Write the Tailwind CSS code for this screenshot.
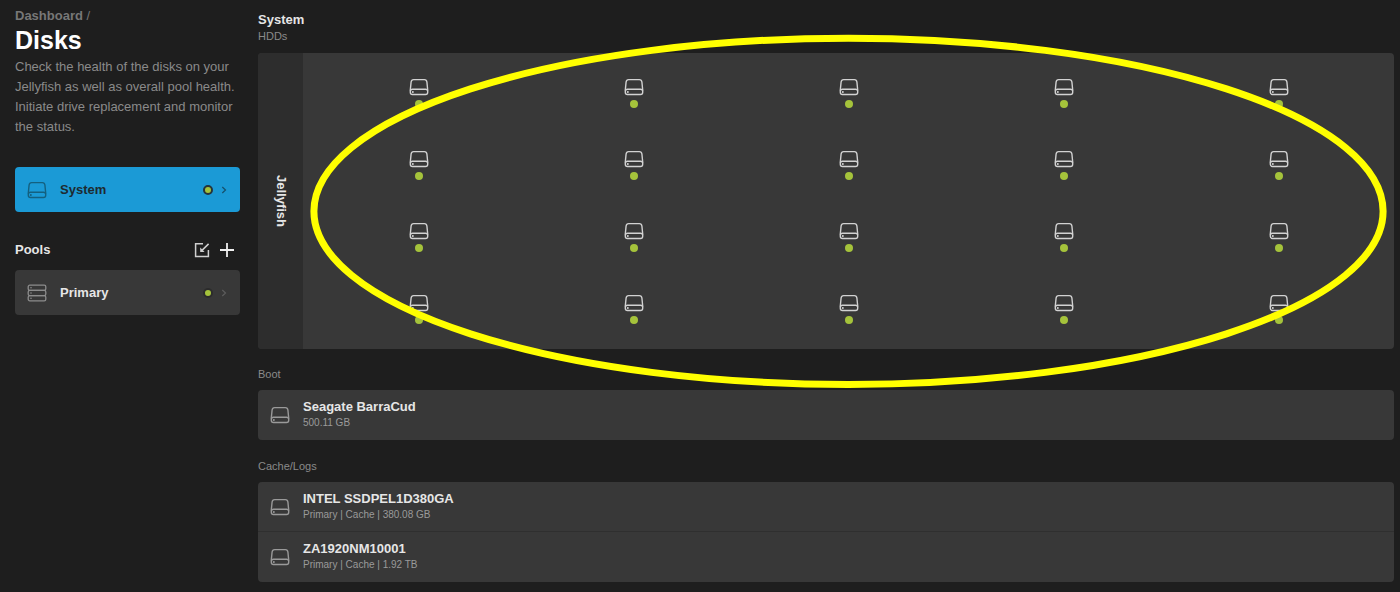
<!DOCTYPE html>
<html lang="en">
<head>
<meta charset="utf-8">
<meta name="viewport" content="width=device-width, initial-scale=1">
<title>Disks</title>
<script src="https://cdn.jsdelivr.net/npm/@tailwindcss/browser@4"></script>
</head>
<body class="min-h-screen bg-[#1e1e1e] font-['Liberation_Sans',Arial,sans-serif] text-[13px] leading-4 text-[#e6e6e6]">
<svg class="hidden" aria-hidden="true">
  <symbol id="drive" viewBox="0 0 20 18">
    <g fill="none" stroke="currentColor" stroke-width="1.4" stroke-linejoin="round">
      <path d="M1.3 12 2.1 4Q2.4 1.6 4.6 1.6H15.4Q17.6 1.6 17.9 4L18.7 12V14.2Q18.7 16.5 16.5 16.5H3.5Q1.3 16.5 1.3 14.2Z"/>
      <path d="M1.4 12.8Q1.7 11.2 3.4 11.2H16.6Q18.3 11.2 18.6 12.8"/>
    </g>
    <circle cx="3.8" cy="13.9" r="1" fill="currentColor"/>
  </symbol>
  <symbol id="pool" viewBox="0 0 20 18">
    <g fill="none" stroke="currentColor" stroke-width="1.3">
      <rect x="1.2" y="1.2" width="17.6" height="5.2" rx="1.6"/>
      <rect x="1.2" y="6.4" width="17.6" height="5.2" rx="1.6"/>
      <rect x="1.2" y="11.6" width="17.6" height="5.2" rx="1.6"/>
    </g>
    <g fill="currentColor"><circle cx="4" cy="3.8" r=".8"/><circle cx="4" cy="9" r=".8"/><circle cx="4" cy="14.2" r=".8"/></g>
  </symbol>
  <symbol id="chevron" viewBox="0 0 6 8">
    <path d="M1.3 1 4.5 4 1.3 7" fill="none" stroke="currentColor" stroke-width="1.2"/>
  </symbol>
</svg>

<div class="flex">
  <aside class="w-60 shrink-0 pl-[15px] pt-2">
    <nav aria-label="Breadcrumb" class="font-bold text-[#777]"><a href="#">Dashboard</a> <span class="font-normal">/</span></nav>
    <h1 class="text-[25px] font-bold leading-8 text-white">Disks</h1>
    <p class="mt-px whitespace-nowrap leading-5 text-[#8a8a8a]">Check the health of the disks on your<br>Jellyfish as well as overall pool health.<br>Initiate drive replacement and monitor<br>the status.</p>

    <a href="#" aria-current="page" class="mt-[30px] flex h-[45px] items-center rounded bg-[#1b9ad6] pl-3 pr-[13px] text-[#1e2a30]">
      <svg class="h-[18px] w-5 text-[#14607f]"><use href="#drive"/></svg>
      <span class="ml-[13px] flex-1 font-bold">System</span>
      <span class="size-[10px] rounded-full border-2 border-[#26343a] bg-[#a5c33b]"></span>
      <svg class="ml-2 h-2 w-1.5 text-[#16506a]"><use href="#chevron"/></svg>
    </a>

    <div class="mt-[30px] flex items-center">
      <h2 class="flex-1 font-bold">Pools</h2>
      <button type="button" aria-label="Import pool" class="text-[#cfcfcf]">
        <svg class="size-4" viewBox="0 0 16 16" fill="none" stroke="currentColor" stroke-width="1.5">
          <path d="M9 1.7H1.6V14.4H14.4V8M14.6 1.9 8 8.4"/>
          <path d="M6.2 5.6V9.9H10.6Z" fill="currentColor" stroke="none"/>
        </svg>
      </button>
      <button type="button" aria-label="Add pool" class="ml-[9px] mr-[5px] text-[#f0f0f0]">
        <svg class="size-4" viewBox="0 0 16 16" fill="none" stroke="currentColor" stroke-width="1.8"><path d="M8 1V15M1 8H15"/></svg>
      </button>
    </div>
    <a href="#" class="mt-3 flex h-[45px] items-center rounded bg-[#383838] pl-3 pr-[13px]">
      <svg class="h-[18px] w-5 text-[#8c8c8c]"><use href="#pool"/></svg>
      <span class="ml-[13px] flex-1 font-bold">Primary</span>
      <span class="size-[10px] rounded-full border-2 border-[#2c2c2c] bg-[#a5c33b]"></span>
      <svg class="ml-2 h-2 w-1.5 text-[#5c5c5c]"><use href="#chevron"/></svg>
    </a>
  </aside>

  <main class="min-w-0 flex-1 pb-2 pl-[18px] pr-1.5 pt-3">
    <h2 class="font-bold">System</h2>
    <h3 class="text-[11px] text-[#8a8a8a]">HDDs</h3>
    <section class="mt-[9px] flex rounded bg-[#383838]">
      <div class="flex w-[45px] items-center justify-center rounded-l bg-[#2d2d2d]">
        <span class="font-bold [writing-mode:vertical-rl]">Jellyfish</span>
      </div>
      <div class="relative flex-1 px-2 py-1">
        <div id="disks" class="grid grid-cols-5"></div>
        <svg class="pointer-events-none absolute inset-0 size-full overflow-visible" aria-hidden="true">
          <ellipse cx="50%" cy="53.5%" rx="49%" ry="58.5%" fill="none" stroke="#ffff00" stroke-width="7"/>
        </svg>
      </div>
    </section>

    <h3 class="mt-[17px] text-[11px] text-[#8a8a8a]">Boot</h3>
    <ul class="mt-2 rounded bg-[#383838]">
      <li class="flex h-[50px] items-center pl-3">
        <svg class="h-[18px] w-5 text-[#9a9a9a]"><use href="#drive"/></svg>
        <div class="ml-[13px]"><p class="font-bold">Seagate BarraCud</p><p class="text-[10px] text-[#9a9a9a]">500.11 GB</p></div>
      </li>
    </ul>

    <h3 class="mt-[18px] text-[11px] text-[#8a8a8a]">Cache/Logs</h3>
    <ul class="mt-2 rounded bg-[#383838]">
      <li class="flex h-[50px] items-center border-b border-[#2f2f2f] pl-3">
        <svg class="h-[18px] w-5 text-[#9a9a9a]"><use href="#drive"/></svg>
        <div class="ml-[13px]"><p class="font-bold">INTEL SSDPEL1D380GA</p><p class="text-[10px] text-[#9a9a9a]">Primary | Cache | 380.08 GB</p></div>
      </li>
      <li class="flex h-[50px] items-center pl-3">
        <svg class="h-[18px] w-5 text-[#9a9a9a]"><use href="#drive"/></svg>
        <div class="ml-[13px]"><p class="font-bold">ZA1920NM10001</p><p class="text-[10px] text-[#9a9a9a]">Primary | Cache | 1.92 TB</p></div>
      </li>
    </ul>
  </main>
</div>
<script>
  const disks = document.getElementById('disks');
  for (let i = 1; i <= 20; i++) {
    disks.insertAdjacentHTML('beforeend',
      `<button type="button" aria-label="Disk ${i}" class="flex h-[72px] flex-col items-center justify-center gap-1 text-[#d2d2d2]">
        <svg class="h-[18px] w-5"><use href="#drive"/></svg>
        <span class="size-2 rounded-full bg-[#a5c33b]"></span>
      </button>`);
  }
</script>
</body>
</html>
